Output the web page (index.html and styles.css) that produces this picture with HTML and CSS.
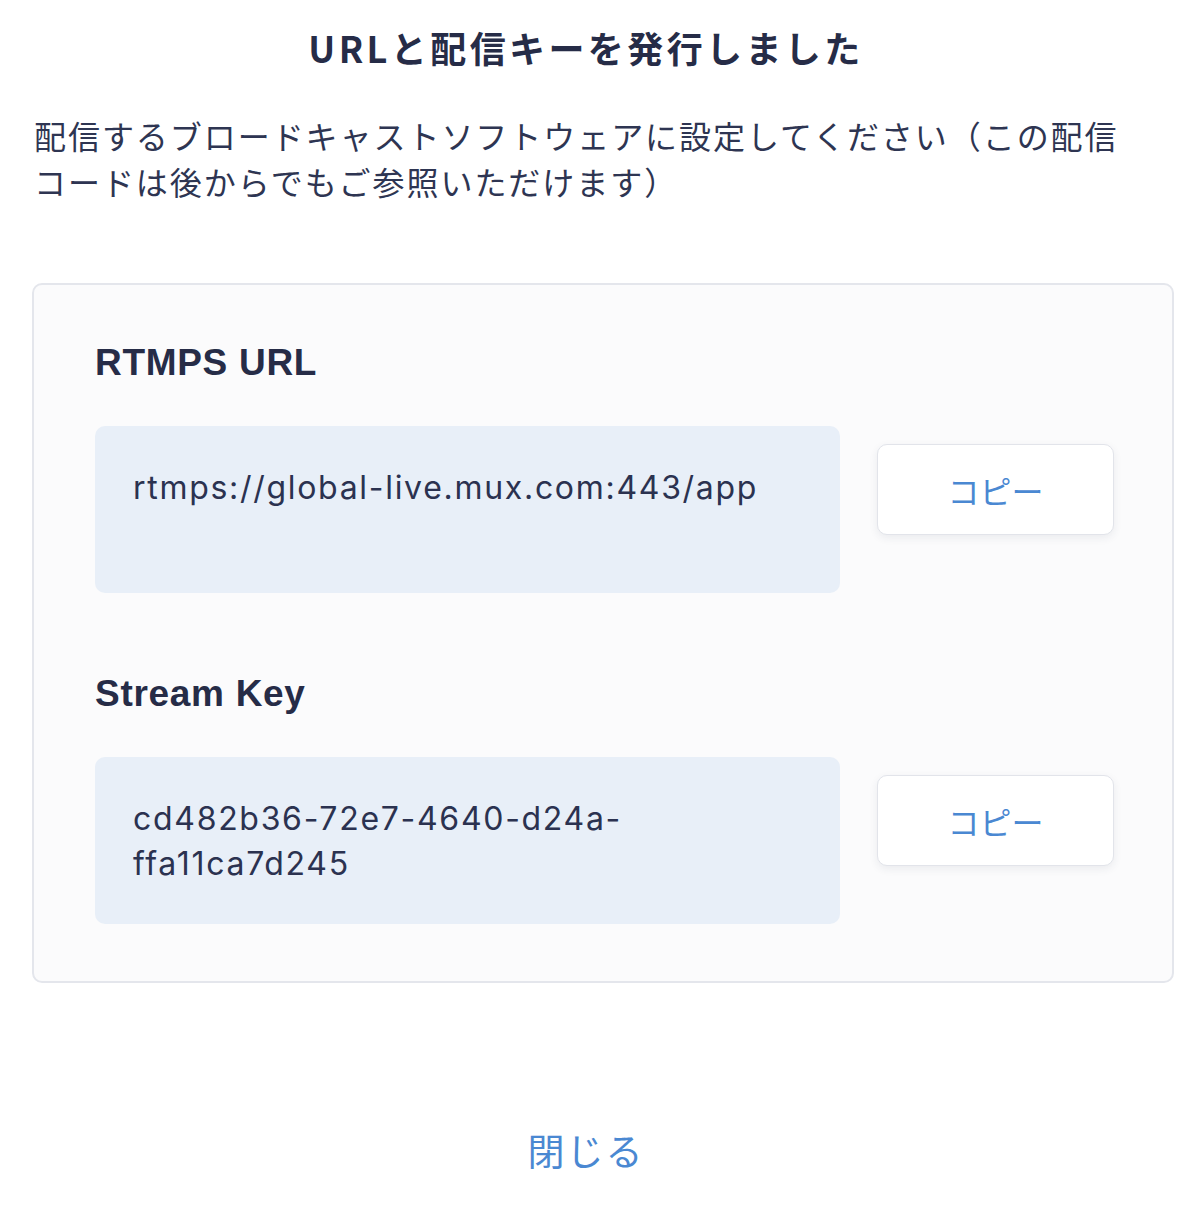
FILE: index.html
```html
<!DOCTYPE html>
<html lang="ja">
<head>
<meta charset="utf-8">
<title>URLと配信キーを発行しました</title>
<link rel="stylesheet" href="styles.css">
</head>
<body>
<div class="dialog">
<h1 class="dialog-title">URLと配信キーを発行しました</h1>
<p class="lead">配信するブロードキャストソフトウェアに設定してください（この配信コードは後からでもご参照いただけます）</p>

<div class="card">
<div class="field">
<h2 class="field-label">RTMPS URL</h2>
<div class="field-row">
<div class="field-value">rtmps://global-live.mux.com:443/app</div>
<button class="copy-btn" type="button">コピー</button>
</div>
</div>

<div class="field">
<h2 class="field-label">Stream Key</h2>
<div class="field-row">
<div class="field-value">cd482b36-72e7-4640-d24a-ffa11ca7d245</div>
<button class="copy-btn" type="button">コピー</button>
</div>
</div>
</div>

<div class="footer">
<a class="close-link" href="#">閉じる</a>
</div>
</div>
</body>
</html>
```

FILE: styles.css
```css
body{
margin:0;
background-color:#ffffff;
color:#2b3250;
font-family:"Noto Sans CJK JP", "Liberation Sans", sans-serif;
}

.dialog{
padding:22px 20px 40px 32px;
}

.dialog-title{
margin:0;
padding-right:34px;
text-align:center;
font-size:36px;
line-height:50px;
font-weight:bold;
letter-spacing:3.4px;
color:#262c47;
}

.lead{
margin:40px 0 0 2px;
max-width:1100px;
font-size:32px;
line-height:46px;
letter-spacing:1.95px;
color:#2e3552;
}

.card{
margin-top:79px;
padding:56px 58px 57px 61px;
border:2px solid #e4e6ec;
border-radius:10px;
background-color:#fbfbfc;
}

.field + .field{
margin-top:79px;
}

.field-label{
margin:0 0 41px 0;
font-family:"Liberation Sans", "Noto Sans CJK JP", sans-serif;
font-size:37px;
line-height:44px;
font-weight:bold;
letter-spacing:0.7px;
color:#262c47;
}

.field-row{
display:flex;
align-items:flex-start;
gap:37px;
}

.field-value{
flex:1;
box-sizing:border-box;
min-height:167px;
padding:39px 38px 37px 38px;
border-radius:10px;
background-color:#e8eff8;
font-family:Inter, "Noto Sans CJK JP", sans-serif;
font-size:32px;
line-height:45px;
letter-spacing:1.7px;
color:#2b3250;
}

.copy-btn{
margin-top:18px;
width:237px;
height:91px;
border:1px solid #e2e4ea;
border-radius:10px;
background-color:#ffffff;
box-shadow:0 3px 8px rgba(40,50,80,0.08);
font-family:"Noto Sans CJK JP", sans-serif;
font-size:32px;
color:#4a88d2;
}

.footer{
margin-top:142px;
padding-right:34px;
text-align:center;
}

.close-link{
font-size:37px;
line-height:50px;
letter-spacing:2px;
color:#4a88d2;
text-decoration:none;
}
```
